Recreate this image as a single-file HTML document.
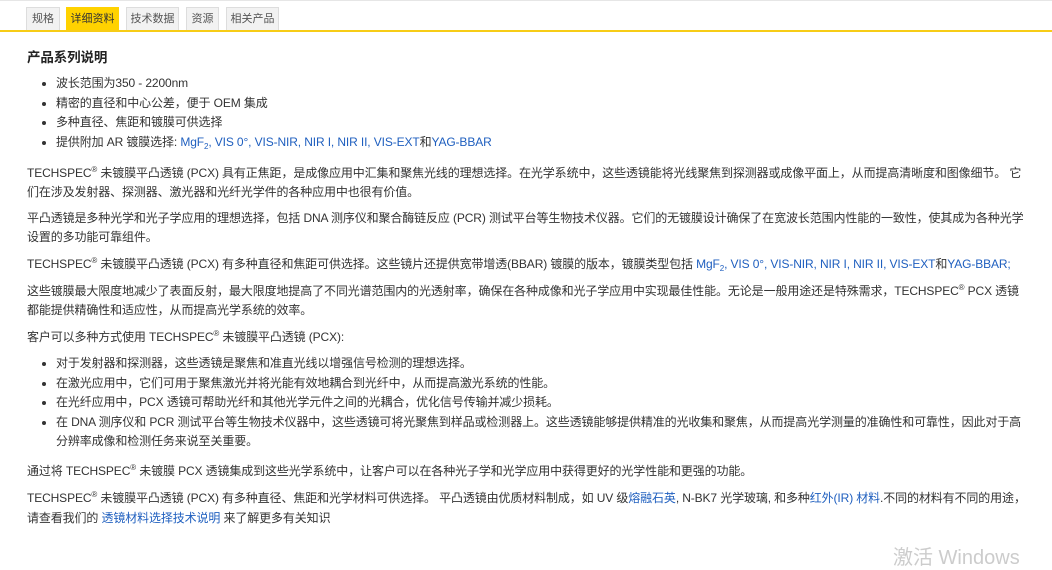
<!DOCTYPE html>
<html><head><meta charset="utf-8"><style>
body{margin:0;background:#fff;font-family:"Liberation Sans","Noto Sans CJK SC",sans-serif;color:#333;font-size:12px;width:1052px;height:559px;overflow:hidden;position:relative}
.top{position:absolute;left:0;top:0;width:1052px;height:1px;background:#e6e6e6}
.tabs{position:absolute;left:26px;top:7px;height:23px}
.tab{position:absolute;top:0;height:23px;line-height:23px;background:#f2f2f2;border:1px solid #ddd;border-bottom:none;box-sizing:border-box;text-align:center;font-size:11px;color:#555}
.tab.on{background:#ffd200;border-color:#ffd200;color:#333}
.line{position:absolute;left:0;top:30px;width:1052px;height:2px;background:#f7cc17}
.c{position:absolute;left:27px;top:47px;width:1002px;line-height:19.5px;letter-spacing:-0.12px}
h3{margin:0 0 5px;font-size:13.5px;font-weight:bold;color:#222;line-height:22px}
ul{margin:0;padding-left:29px}
li{margin:0}
p{margin:0 0 8.3px}
a{color:#1f5fbf;text-decoration:none}
sup{font-size:8px;line-height:0;vertical-align:0;position:relative;top:-5px}
sub{font-size:8px;line-height:0;vertical-align:0;position:relative;top:3px}
</style></head><body>
<div class="top"></div>
<div class="tabs">
<div class="tab" style="left:0;width:34px">规格</div>
<div class="tab on" style="left:40px;width:53px">详细资料</div>
<div class="tab" style="left:100px;width:53px">技术数据</div>
<div class="tab" style="left:160px;width:33px">资源</div>
<div class="tab" style="left:200px;width:53px">相关产品</div>
</div>
<div class="line"></div>
<div class="c">
<h3>产品系列说明</h3>
<ul style="margin-bottom:12px">
<li>波长范围为350 - 2200nm</li>
<li>精密的直径和中心公差，便于 OEM 集成</li>
<li>多种直径、焦距和镀膜可供选择</li>
<li>提供附加 AR 镀膜选择: <a>MgF<sub>2</sub>, VIS 0°, VIS-NIR, NIR I, NIR II, VIS-EXT</a>和<a>YAG-BBAR</a></li>
</ul>
<p style="line-height:18.5px">TECHSPEC<sup>®</sup> 未镀膜平凸透镜 (PCX) 具有正焦距，是成像应用中汇集和聚焦光线的理想选择。在光学系统中，这些透镜能将光线聚焦到探测器或成像平面上，从而提高清晰度和图像细节。 它们在涉及发射器、探测器、激光器和光纤光学件的各种应用中也很有价值。</p>
<p style="line-height:18.5px">平凸透镜是多种光学和光子学应用的理想选择，包括 DNA 测序仪和聚合酶链反应 (PCR) 测试平台等生物技术仪器。它们的无镀膜设计确保了在宽波长范围内性能的一致性，使其成为各种光学设置的多功能可靠组件。</p>
<p>TECHSPEC<sup>®</sup> 未镀膜平凸透镜 (PCX) 有多种直径和焦距可供选择。这些镜片还提供宽带增透(BBAR) 镀膜的版本，镀膜类型包括 <a>MgF<sub>2</sub>, VIS 0°, VIS-NIR, NIR I, NIR II, VIS-EXT</a>和<a>YAG-BBAR;</a></p>
<p style="line-height:18.5px">这些镀膜最大限度地减少了表面反射，最大限度地提高了不同光谱范围内的光透射率，确保在各种成像和光子学应用中实现最佳性能。无论是一般用途还是特殊需求，TECHSPEC<sup>®</sup> PCX 透镜<br>都能提供精确性和适应性，从而提高光学系统的效率。</p>
<p style="margin-bottom:7px">客户可以多种方式使用 TECHSPEC<sup>®</sup> 未镀膜平凸透镜 (PCX):</p>
<ul style="margin-bottom:10px">
<li>对于发射器和探测器，这些透镜是聚焦和准直光线以增强信号检测的理想选择。</li>
<li>在激光应用中，它们可用于聚焦激光并将光能有效地耦合到光纤中，从而提高激光系统的性能。</li>
<li>在光纤应用中，PCX 透镜可帮助光纤和其他光学元件之间的光耦合，优化信号传输并减少损耗。</li>
<li>在 DNA 测序仪和 PCR 测试平台等生物技术仪器中，这些透镜可将光聚焦到样品或检测器上。这些透镜能够提供精准的光收集和聚焦，从而提高光学测量的准确性和可靠性，因此对于高分辨率成像和检测任务来说至关重要。</li>
</ul>
<p>通过将 TECHSPEC<sup>®</sup> 未镀膜 PCX 透镜集成到这些光学系统中，让客户可以在各种光子学和光学应用中获得更好的光学性能和更强的功能。</p>
<p>TECHSPEC<sup>®</sup> 未镀膜平凸透镜 (PCX) 有多种直径、焦距和光学材料可供选择。 平凸透镜由优质材料制成，如 UV 级<a>熔融石英</a>, N-BK7 光学玻璃, 和多种<a>红外(IR) 材料</a>.不同的材料有不同的用途，请查看我们的 <a>透镜材料选择技术说明</a> 来了解更多有关知识</p>
</div>
<div style="position:absolute;left:893px;top:546px;font-size:20px;color:#ccc;line-height:24px">激活 Windows</div>
</body></html>
